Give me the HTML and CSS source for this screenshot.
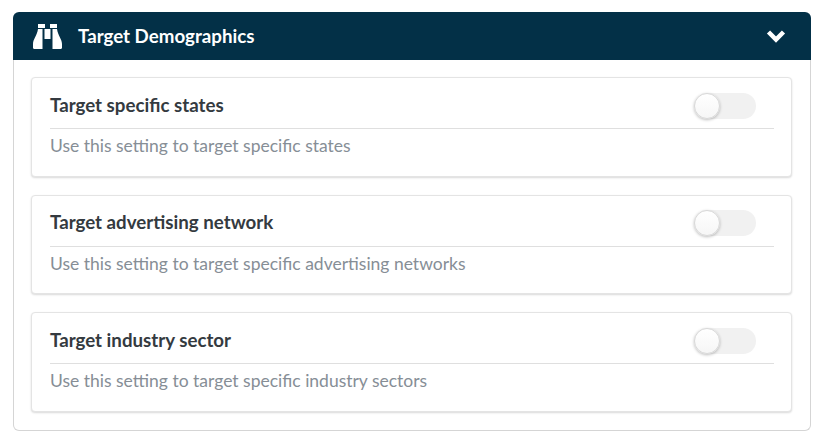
FILE: index.html
```html
<!DOCTYPE html>
<html lang="en">
<head>
    <meta charset="UTF-8">
    <title>Target Demographics</title>
    <link rel="stylesheet" href="styles.css">
</head>
<body>
    <div class="panel">
        <div class="panel-head">
            <svg class="icon-binoculars" viewBox="0 0 29 25" width="29" height="25">
                <path fill="#fff" d="M5 0h7v4H5zM17 0h7v4h-7zM5 5h4.500v20H1.200C.4 25 0 24.500 0 23.800V20c0-5 4-8 5-15zM24 5h-4.500v20h8.300c.8 0 1.200-.5 1.200-1.200V20c0-5-4-8-5-15zM11.500 5h6v10h-6z"/>
            </svg>
            <span class="panel-title">Target Demographics</span>
            <svg class="icon-chevron" viewBox="0 0 20 14" width="20" height="14">
                <path fill="none" stroke="#fff" stroke-width="4.500" d="M2.500 3l7.500 7.500L17.500 3"/>
            </svg>
        </div>
        <div class="panel-body">
            <div class="setting">
                <div class="setting-top">
                    <span class="setting-name">Target specific states</span>
                    <span class="toggle"><span class="knob"></span></span>
                </div>
                <p class="setting-desc">Use this setting to target specific states</p>
            </div>
            <div class="setting">
                <div class="setting-top">
                    <span class="setting-name">Target advertising network</span>
                    <span class="toggle"><span class="knob"></span></span>
                </div>
                <p class="setting-desc">Use this setting to target specific advertising networks</p>
            </div>
            <div class="setting">
                <div class="setting-top">
                    <span class="setting-name">Target industry sector</span>
                    <span class="toggle"><span class="knob"></span></span>
                </div>
                <p class="setting-desc">Use this setting to target specific industry sectors</p>
            </div>
        </div>
    </div>
</body>
</html>
```

FILE: styles.css
```css
body {
    margin: 0;
    padding: 12px 11px 6px 13px;
    background: #fff;
    font-family: "Lato", "Liberation Sans", sans-serif;
    color: #343a40;
}
.panel {
    border-radius: 6px;
}
.panel-head {
    height: 48px;
    display: flex;
    align-items: center;
    padding: 0 25px 0 20px;
    background: #033047;
    border-radius: 6px 6px 0 0;
    color: #fff;
}
.icon-binoculars {
    margin-right: 16px;
}
.panel-title {
    flex: 1;
    font-size: 18.72px;
    font-weight: 700;
}
.panel-body {
    display: flex;
    flex-direction: column;
    gap: 18px;
    padding: 17px 18px 18px 17px;
    border: 1px solid #d5d5d5;
    border-top: none;
    border-radius: 0 0 6px 6px;
}
.setting {
    height: 99.6px;
    box-sizing: border-box;
    padding: 0 17px 0 18px;
    border: 1px solid #e4e4e4;
    border-radius: 4px;
    box-shadow: 0 1px 2px rgba(0,0,0,0.15);
    background: #fff;
}
.setting-top {
    height: 51px;
    box-sizing: border-box;
    padding-top: 3px;
    display: flex;
    align-items: center;
    justify-content: space-between;
    border-bottom: 1px solid #dfdfdf;
}
.setting-name {
    font-size: 18.72px;
    font-weight: 700;
}
.toggle {
    width: 62px;
    height: 26px;
    margin: 2px 18px 0 0;
    border-radius: 13px;
    background: #f1f1f1;
    display: flex;
    align-items: center;
}
.knob {
    width: 26px;
    height: 26px;
    box-sizing: border-box;
    border: 1px solid #d8d8d8;
    border-radius: 50%;
    background: linear-gradient(#fff, #f6f6f6);
    box-shadow: 0 1px 3px rgba(0,0,0,0.25);
}
.setting-desc {
    margin: 6px 0 0;
    font-size: 17.5px;
    line-height: 22px;
    color: #868e96;
}
```
